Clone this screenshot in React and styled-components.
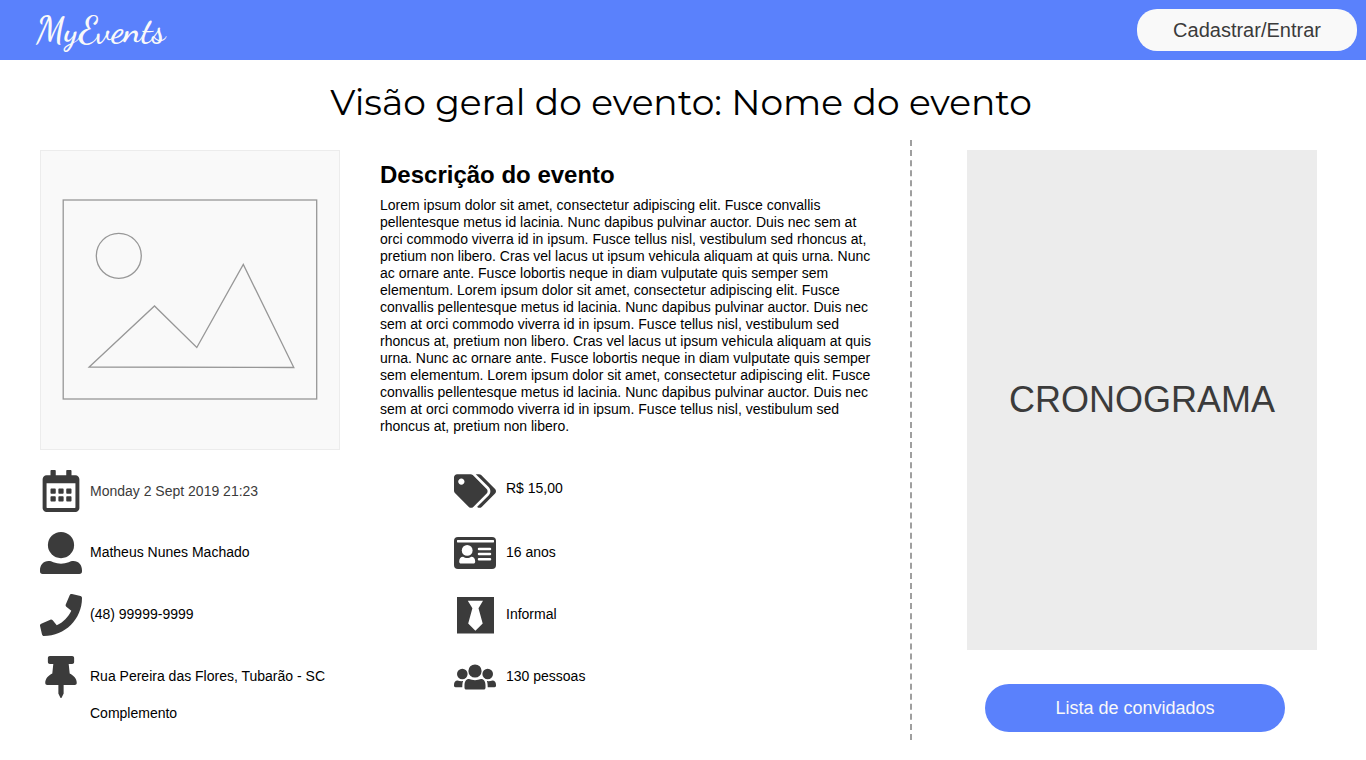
import React from "react";
import styled, { createGlobalStyle } from "styled-components";
import { FaRegCalendarAlt, FaPhone, FaThumbtack, FaTags } from "react-icons/fa";

const GlobalStyle = createGlobalStyle`
  * { box-sizing: border-box; }
  body {
    margin: 0;
    background: #ffffff;
    color: #000000;
    font-family: "Liberation Sans", Arial, sans-serif;
    font-size: 14px;
  }
  h1, h2, p, ul { margin: 0; padding: 0; }
`;

const Header = styled.header`
  display: flex;
  align-items: center;
  justify-content: space-between;
  height: 60px;
  padding: 0 9px 0 36px;
  background: #5a81fc;
`;

const Logo = styled.a`
  color: #f9f9f9;
  font-family: "Dancing Script", cursive;
  font-size: 37px;
  font-weight: 600;
  line-height: 48px;
  text-decoration: none;
`;

const PillButton = styled.button`
  width: ${(p) => p.$width};
  height: ${(p) => p.$height};
  padding: 0;
  border: 0;
  border-radius: ${(p) => p.$radius};
  background: ${(p) => (p.$primary ? "#5a81fc" : "#f9f9f9")};
  color: ${(p) => (p.$primary ? "#f9f9f9" : "#3b3b3b")};
  font-family: inherit;
  font-size: ${(p) => (p.$primary ? "18px" : "20px")};
  cursor: pointer;
`;

const Title = styled.h1`
  padding: 18px 24px 14px 20px;
  font-family: Montserrat, Inter, sans-serif;
  font-size: 36px;
  font-weight: 400;
  line-height: 48px;
  text-align: center;
`;

const Page = styled.main`
  display: flex;
`;

const Overview = styled.section`
  flex: 1;
  min-width: 0;
  padding: 10px 36px 10px 40px;
`;

const Summary = styled.div`
  display: flex;
  gap: 40px;
`;

const Cover = styled.svg`
  flex: none;
  width: 300px;
  height: 300px;
  border: 1px solid #ececec;
  background: #f9f9f9;
`;

const Description = styled.article`
  flex: 1;
  min-width: 0;
  padding-top: 10px;
`;

const Subtitle = styled.h2`
  margin-bottom: 7px;
  font-size: 24px;
  line-height: 30px;
`;

const Text = styled.p`
  line-height: 17px;
`;

const Facts = styled.div`
  display: grid;
  grid-template-columns: 1fr 1fr;
  margin-top: 20px;
  padding-right: 6px;
`;

const FactList = styled.ul`
  display: flex;
  flex-direction: column;
  gap: 20px;
  list-style: none;
`;

const Fact = styled.li`
  display: flex;
  gap: ${(p) => p.$gap};
  color: ${(p) => (p.$muted ? "#3b3b3b" : "#000000")};
  line-height: ${(p) => p.$line || "40px"};

  & > svg {
    flex: none;
    width: 42px;
    height: 42px;
    color: #3b3b3b;
  }
`;

const FactLine = styled.span`
  display: block;
  line-height: ${(p) => (p.$extra ? "34px" : "inherit")};
`;

const Sidebar = styled.aside`
  flex: none;
  width: 456px;
  padding: 10px 49px 8px 55px;
  border-left: 2px dashed #9f9f9f;
`;

const Schedule = styled.div`
  display: flex;
  align-items: center;
  justify-content: center;
  height: 500px;
  margin-bottom: 34px;
  background: #ececec;
  color: #3b3b3b;
  font-size: 36px;
`;

const Actions = styled.div`
  padding-left: 18px;
`;

function PersonIcon() {
  return (
    <svg viewBox="0 0 42 42" fill="currentColor" aria-hidden="true">
      <circle cx="21" cy="13.100" r="13.100" />
      <path d="M0 38.500c0-5.600 3.300-9.500 8.600-9.500 1.800 0 3.200.6 4.700 1.200 4.900 1.900 10.500 1.900 15.400 0 1.500-.6 2.900-1.200 4.700-1.200 5.300 0 8.600 3.900 8.600 9.500v.8c0 1.800-.9 2.700-2.700 2.700H2.700C.9 42 0 41.100 0 39.300z" />
    </svg>
  );
}

function IdCardIcon() {
  return (
    <svg viewBox="0 0 42 42" aria-hidden="true">
      <rect x="0" y="5" width="42" height="32" rx="4" fill="currentColor" />
      <rect x="3" y="8" width="37" height="2.4" rx="0.6" fill="#fff" />
      <circle cx="13.2" cy="18.4" r="5.4" fill="#fff" />
      <path d="M5.2 29.5c0-3 1.500-4.800 3.900-4.800 1.200.8 2.500 1.300 4.100 1.300s2.900-.5 4.100-1.300c2.400 0 3.900 1.800 3.900 4.800 0 1.400-.8 2-1.700 2H6.900c-.9 0-1.700-.6-1.700-2z" fill="#fff" />
      <path d="M25 17h11M25 22.100h11M25 27.300h11" stroke="#fff" strokeWidth="2.500" strokeLinecap="round" />
    </svg>
  );
}

function TieIcon() {
  return (
    <svg viewBox="0 0 42 42" aria-hidden="true">
      <path d="M3 3h37v36.500H3z" fill="currentColor" />
      <path d="M13.800 6.800h15.200l-4.500 7.500 4.200 15.300-7.300 7.200-7.200-7.200 4.200-15.300z" fill="#fff" />
    </svg>
  );
}

function PeopleIcon() {
  return (
    <svg viewBox="0 0 42 42" fill="currentColor" aria-hidden="true">
      <circle cx="8.300" cy="18" r="5.300" />
      <circle cx="33.700" cy="18" r="5.300" />
      <circle cx="21" cy="15" r="6.600" />
      <path d="M10.500 29.500c0-4 1.500-6.500 4.500-6.500 3.800 1.500 8.200 1.500 12 0 3 0 4.500 2.500 4.500 6.500v2.300c0 1.200-.7 1.800-1.800 1.800H12.300c-1.100 0-1.800-.6-1.800-1.800z" />
      <path d="M0 29c0-2.900 1.300-4.500 3.500-4.500 1.700.6 3.600.8 5.600.6-.6 1.700-.8 3.700-.8 6.100H1.500C.5 31.200 0 30.700 0 29.800z" />
      <path d="M42 29c0-2.900-1.300-4.500-3.500-4.500-1.700.6-3.600.8-5.600.6.6 1.700.8 3.700.8 6.100h6.800c1 0 1.500-.5 1.500-1.400z" />
    </svg>
  );
}

const contactFacts = [
  { Icon: FaRegCalendarAlt, text: "Monday 2 Sept 2019 21:23", muted: true, line: "42px" },
  { Icon: PersonIcon, text: "Matheus Nunes Machado" },
  { Icon: FaPhone, text: "(48) 99999-9999" },
  { Icon: FaThumbtack, text: "Rua Pereira das Flores, Tubarão - SC", extra: "Complemento" },
];

const eventFacts = [
  { Icon: FaTags, text: "R$ 15,00", line: "36px" },
  { Icon: IdCardIcon, text: "16 anos" },
  { Icon: TieIcon, text: "Informal" },
  { Icon: PeopleIcon, text: "130 pessoas" },
];

function FactColumn({ facts, gap }) {
  return (
    <FactList>
      {facts.map(({ Icon, text, extra, muted, line }) => (
        <Fact key={text} $gap={gap} $muted={muted} $line={line}>
          <Icon />
          <div>
            <FactLine>{text}</FactLine>
            {extra && <FactLine $extra>{extra}</FactLine>}
          </div>
        </Fact>
      ))}
    </FactList>
  );
}

export default function App() {
  return (
    <>
      <GlobalStyle />
      <Header>
        <Logo href="#">MyEvents</Logo>
        <PillButton type="button" $width="220px" $height="42px" $radius="20px">Cadastrar/Entrar</PillButton>
      </Header>
      <Title>Visão geral do evento: Nome do evento</Title>
      <Page>
        <Overview>
          <Summary>
            <Cover viewBox="0 0 298 298" fill="none" stroke="#979797" strokeWidth="1.3" role="img" aria-label="Imagem do evento">
              <rect x="22.200" y="49" width="253.500" height="199" />
              <circle cx="77.800" cy="104.800" r="22.500" />
              <path d="M48.200 216 113.500 155l42.300 41.500 46.500-83 50.500 103z" />
            </Cover>
            <Description>
              <Subtitle>Descrição do evento</Subtitle>
              <Text>
                Lorem ipsum dolor sit amet, consectetur adipiscing elit. Fusce convallis
                pellentesque metus id lacinia. Nunc dapibus pulvinar auctor. Duis nec sem at
                orci commodo viverra id in ipsum. Fusce tellus nisl, vestibulum sed rhoncus at,
                pretium non libero. Cras vel lacus ut ipsum vehicula aliquam at quis urna. Nunc
                ac ornare ante. Fusce lobortis neque in diam vulputate quis semper sem
                elementum. Lorem ipsum dolor sit amet, consectetur adipiscing elit. Fusce
                convallis pellentesque metus id lacinia. Nunc dapibus pulvinar auctor. Duis nec
                sem at orci commodo viverra id in ipsum. Fusce tellus nisl, vestibulum sed
                rhoncus at, pretium non libero. Cras vel lacus ut ipsum vehicula aliquam at quis
                urna. Nunc ac ornare ante. Fusce lobortis neque in diam vulputate quis semper
                sem elementum. Lorem ipsum dolor sit amet, consectetur adipiscing elit. Fusce
                convallis pellentesque metus id lacinia. Nunc dapibus pulvinar auctor. Duis nec
                sem at orci commodo viverra id in ipsum. Fusce tellus nisl, vestibulum sed
                rhoncus at, pretium non libero.
              </Text>
            </Description>
          </Summary>
          <Facts>
            <FactColumn facts={contactFacts} gap="8px" />
            <FactColumn facts={eventFacts} gap="10px" />
          </Facts>
        </Overview>
        <Sidebar>
          <Schedule>CRONOGRAMA</Schedule>
          <Actions>
            <PillButton type="button" $primary $width="300px" $height="48px" $radius="24px">Lista de convidados</PillButton>
          </Actions>
        </Sidebar>
      </Page>
    </>
  );
}
